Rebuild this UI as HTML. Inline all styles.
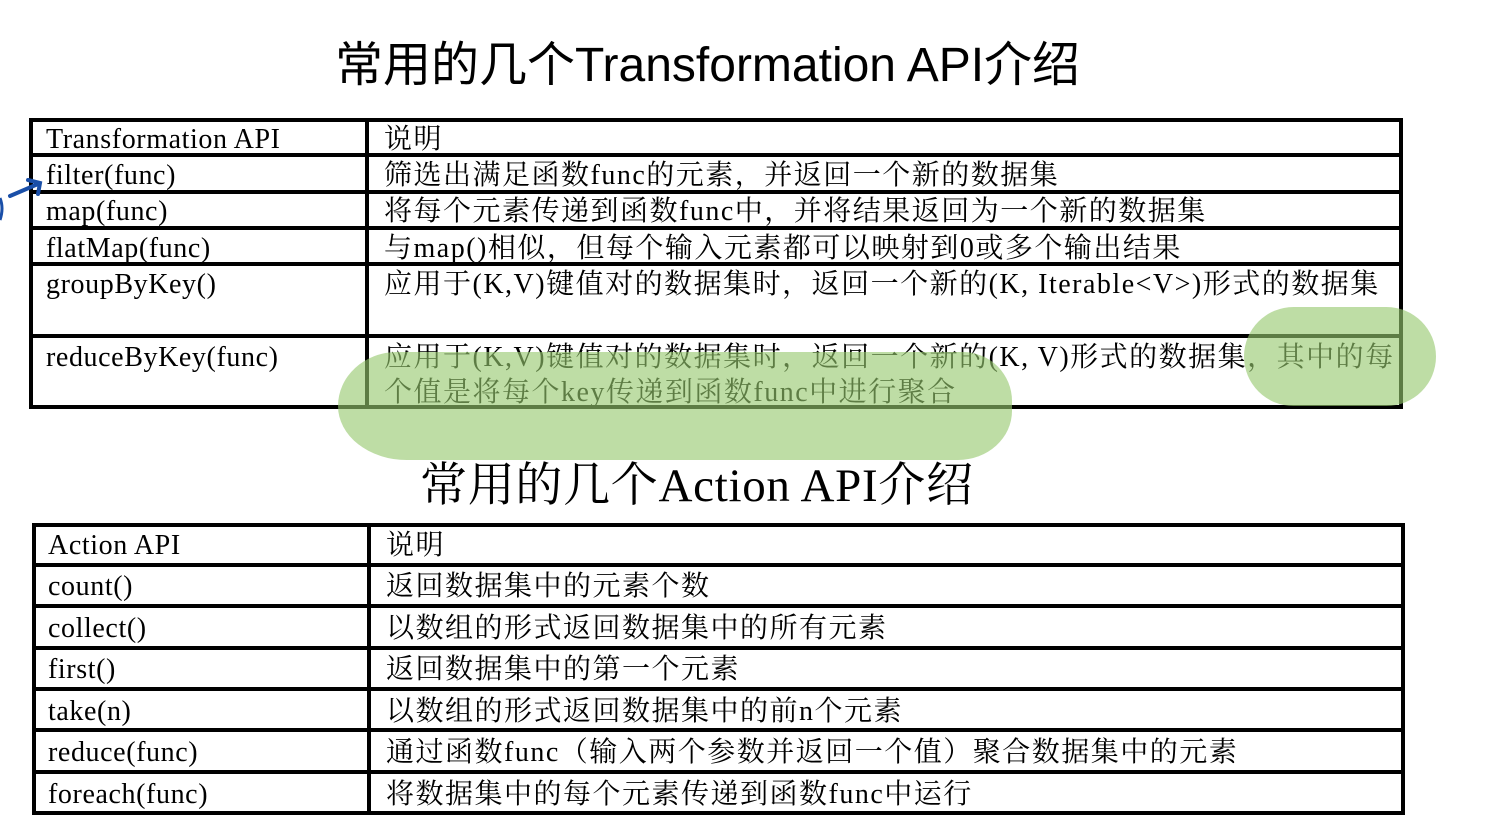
<!DOCTYPE html>
<html><head><meta charset="utf-8"><style>
body{margin:0;width:1508px;height:831px;background:#fff;position:relative;overflow:hidden;font-family:"Liberation Serif","Noto Serif CJK SC",serif;color:#000}
.l{position:absolute;background:#000}
.t{position:absolute;font-size:28px;line-height:32px;white-space:nowrap;letter-spacing:0.6px;margin-top:2px}
.d{letter-spacing:1.5px}
.g{position:absolute;background:rgba(150,200,110,0.62)}
</style></head><body>
<div style="position:absolute;left:335px;top:37px;font-family:'Liberation Sans','Noto Sans CJK SC',sans-serif;font-size:48px;line-height:58px;white-space:nowrap">常用的几个Transformation API介绍</div>

<div class="l" style="left:29px;top:118px;width:1374px;height:4px"></div>
<div class="l" style="left:29px;top:153px;width:1374px;height:4px"></div>
<div class="l" style="left:29px;top:190px;width:1374px;height:4px"></div>
<div class="l" style="left:29px;top:226px;width:1374px;height:4px"></div>
<div class="l" style="left:29px;top:262px;width:1374px;height:4px"></div>
<div class="l" style="left:29px;top:334px;width:1374px;height:4px"></div>
<div class="l" style="left:29px;top:405px;width:1374px;height:4px"></div>
<div class="l" style="left:29px;top:118px;width:4px;height:291px"></div>
<div class="l" style="left:365px;top:118px;width:4px;height:291px"></div>
<div class="l" style="left:1399px;top:118px;width:4px;height:291px"></div>

<div class="t" style="left:46px;top:122px">Transformation API</div>
<div class="t d" style="left:384px;top:122px">说明</div>
<div class="t" style="left:46px;top:158px">filter(func)</div>
<div class="t d" style="left:384px;top:158px">筛选出满足函数func的元素，并返回一个新的数据集</div>
<div class="t" style="left:46px;top:194px">map(func)</div>
<div class="t d" style="left:384px;top:194px">将每个元素传递到函数func中，并将结果返回为一个新的数据集</div>
<div class="t" style="left:46px;top:231px">flatMap(func)</div>
<div class="t d" style="left:384px;top:231px">与map()相似，但每个输入元素都可以映射到0或多个输出结果</div>
<div class="t" style="left:46px;top:267px">groupByKey()</div>
<div class="t d" style="left:384px;top:267px">应用于(K,V)键值对的数据集时，返回一个新的(K, Iterable&lt;V&gt;)形式的数据集</div>
<div class="t" style="left:46px;top:340px">reduceByKey(func)</div>
<div class="t d" style="left:384px;top:340px">应用于(K,V)键值对的数据集时，返回一个新的(K, V)形式的数据集，其中的每</div>
<div class="t d" style="left:384px;top:375px">个值是将每个key传递到函数func中进行聚合</div>

<div class="g" style="left:338px;top:352px;width:674px;height:108px;border-radius:60px 50px 55px 70px / 55px 50px 50px 55px"></div>
<div class="g" style="left:1244px;top:307px;width:192px;height:99px;border-radius:50px"></div>

<svg style="position:absolute;left:0;top:170px" width="50" height="60"><path d="M10 26 L38 14 M28 10 L40 13 L38 24" fill="none" stroke="#1a4fa8" stroke-width="4" stroke-linecap="round"/><path d="M0 28 Q4 38 0 50" fill="none" stroke="#1a4fa8" stroke-width="3"/></svg>

<div style="position:absolute;left:420px;top:457px;font-size:47px;line-height:58px;white-space:nowrap;letter-spacing:0.7px">常用的几个Action API介绍</div>

<div class="l" style="left:32px;top:523px;width:1373px;height:4px"></div>
<div class="l" style="left:32px;top:563px;width:1373px;height:4px"></div>
<div class="l" style="left:32px;top:604px;width:1373px;height:4px"></div>
<div class="l" style="left:32px;top:646px;width:1373px;height:4px"></div>
<div class="l" style="left:32px;top:687px;width:1373px;height:4px"></div>
<div class="l" style="left:32px;top:728px;width:1373px;height:4px"></div>
<div class="l" style="left:32px;top:770px;width:1373px;height:4px"></div>
<div class="l" style="left:32px;top:811px;width:1373px;height:4px"></div>
<div class="l" style="left:32px;top:523px;width:4px;height:292px"></div>
<div class="l" style="left:367px;top:523px;width:4px;height:292px"></div>
<div class="l" style="left:1401px;top:523px;width:4px;height:292px"></div>

<div class="t" style="left:48px;top:528px">Action API</div>
<div class="t d" style="left:386px;top:528px">说明</div>
<div class="t" style="left:48px;top:569px">count()</div>
<div class="t d" style="left:386px;top:569px">返回数据集中的元素个数</div>
<div class="t" style="left:48px;top:611px">collect()</div>
<div class="t d" style="left:386px;top:611px">以数组的形式返回数据集中的所有元素</div>
<div class="t" style="left:48px;top:652px">first()</div>
<div class="t d" style="left:386px;top:652px">返回数据集中的第一个元素</div>
<div class="t" style="left:48px;top:694px">take(n)</div>
<div class="t d" style="left:386px;top:694px">以数组的形式返回数据集中的前n个元素</div>
<div class="t" style="left:48px;top:735px">reduce(func)</div>
<div class="t d" style="left:386px;top:735px">通过函数func（输入两个参数并返回一个值）聚合数据集中的元素</div>
<div class="t" style="left:48px;top:777px">foreach(func)</div>
<div class="t d" style="left:386px;top:777px">将数据集中的每个元素传递到函数func中运行</div>
</body></html>
